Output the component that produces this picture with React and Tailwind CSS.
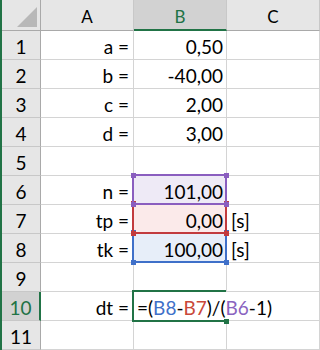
import React from "react";

const rows = [
  { a: "a =", b: "0,50" },
  { a: "b =", b: "-40,00" },
  { a: "c =", b: "2,00" },
  { a: "d =", b: "3,00" },
  {},
  { a: "n =", b: "101,00", fill: "bg-[#eeeaf6]" },
  { a: "tp =", b: "0,00", c: "[s]", fill: "bg-[#fbeaea]" },
  { a: "tk =", b: "100,00", c: "[s]", fill: "bg-[#e7eef9]" },
  {},
  { a: "dt =", sel: true },
  {},
];

function Handle({ cls }) {
  return <div className={"absolute w-[5px] h-[5px] " + cls} />;
}

export default function App() {
  return (
    <div
      className="relative w-[320px] h-[350px] overflow-hidden bg-white flex text-black"
      style={{ fontFamily: "Lato, 'Open Sans', sans-serif" }}
    >
      <div className="w-[2px] h-full bg-[#217346] shrink-0" />
      <div className="relative grid grid-cols-[39px_93px_93px_93px] grid-rows-[31px_repeat(11,29px)]">
        {/* header row */}
        <div className="border-r border-b border-[#a9a9a9] bg-[#e6e6e6]">
          <svg width="38" height="30" viewBox="0 0 38 30">
            <polygon points="15,27 35,27 35,7" fill="#b8b8b8" />
          </svg>
        </div>
        <div className="border-r border-r-[#c8c8c8] border-b border-b-[#a9a9a9] bg-[#e6e6e6] flex items-end justify-center pb-[5px] text-[17px] leading-none">
          A
        </div>
        <div className="border-r border-r-[#c8c8c8] border-b-2 border-b-[#217346] bg-[#d2d2d2] flex items-end justify-center pb-[4px] text-[17px] leading-none text-[#217346]">
          B
        </div>
        <div className="border-r border-r-[#c8c8c8] border-b border-b-[#a9a9a9] bg-[#e6e6e6] flex items-end justify-center pb-[5px] text-[17px] leading-none">
          C
        </div>

        {rows.map((r, i) => (
          <React.Fragment key={i}>
            <div
              className={
                "border-b border-b-[#c8c8c8] flex items-end justify-center pb-[3px] text-[19px] leading-none " +
                (r.sel
                  ? "bg-[#d2d2d2] border-r-2 border-r-[#217346] text-[#217346]"
                  : "bg-[#e6e6e6] border-r border-r-[#a9a9a9]")
              }
            >
              {i + 1}
            </div>
            <div className="border-r border-b border-[#d4d4d4] flex items-end justify-end pr-[4px] pb-[3px] text-[19px] leading-none whitespace-nowrap">
              {r.a}
            </div>
            <div
              className={
                "border-r border-b border-[#d4d4d4] flex items-end justify-end pr-[3px] pb-[3px] text-[19px] leading-none whitespace-nowrap " +
                (r.fill || "")
              }
            >
              {r.b}
            </div>
            <div className="border-r border-b border-[#d4d4d4] flex items-end justify-start pl-[4px] pb-[3px] text-[19px] leading-none whitespace-nowrap">
              {r.c}
            </div>
          </React.Fragment>
        ))}

        {/* blue B8 */}
        <div className="absolute left-[130px] top-[232px] w-[95px] h-[31px] border-2 border-[#3f70c9]" />
        <Handle cls="left-[129px] top-[260px] bg-[#3f70c9]" />
        <Handle cls="left-[222px] top-[260px] bg-[#3f70c9]" />
        <Handle cls="left-[129px] top-[230px] bg-[#3f70c9]" />
        <Handle cls="left-[222px] top-[230px] bg-[#3f70c9]" />

        {/* red B7 */}
        <div className="absolute left-[130px] top-[203px] w-[95px] h-[31px] border-2 border-[#c23b3e]" />
        <Handle cls="left-[129px] top-[231px] bg-[#c23b3e]" />
        <Handle cls="left-[222px] top-[231px] bg-[#c23b3e]" />
        <Handle cls="left-[129px] top-[201px] bg-[#c23b3e]" />
        <Handle cls="left-[222px] top-[201px] bg-[#c23b3e]" />

        {/* purple B6 */}
        <div className="absolute left-[130px] top-[174px] w-[95px] h-[31px] border-2 border-[#8a5ebf]" />
        <Handle cls="left-[129px] top-[173px] bg-[#8a5ebf]" />
        <Handle cls="left-[222px] top-[173px] bg-[#8a5ebf]" />
        <Handle cls="left-[129px] top-[202px] bg-[#8a5ebf]" />
        <Handle cls="left-[222px] top-[202px] bg-[#8a5ebf]" />

        {/* editor B10 */}
        <div className="absolute left-[132px] top-[292px] w-[140px] h-[28px] bg-white flex items-end pl-[3px] pb-[3px] text-[19px] leading-none whitespace-nowrap">
          <span>=(</span>
          <span className="text-[#3f70c9]">B8</span>
          <span>-</span>
          <span className="text-[#c9483a]">B7</span>
          <span>)/(</span>
          <span className="text-[#8a64c0]">B6</span>
          <span>-1)</span>
        </div>
        <div className="absolute left-[130px] top-[290px] w-[94px] h-[32px] border-l-2 border-t-2 border-b-2 border-[#217346]" />
        <Handle cls="left-[222px] top-[319px] bg-[#217346]" />
      </div>
    </div>
  );
}
